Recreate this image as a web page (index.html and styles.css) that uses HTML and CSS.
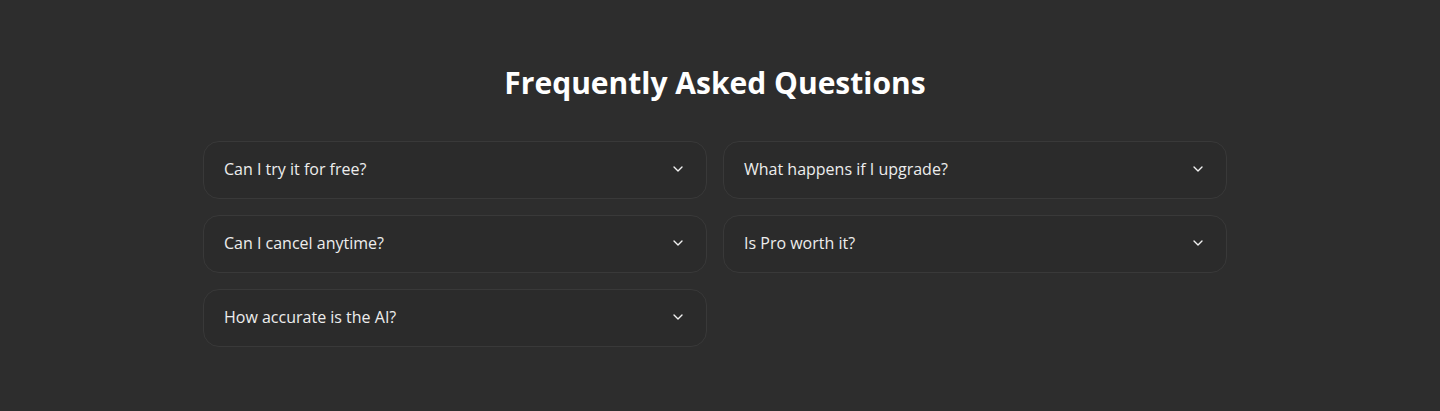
FILE: index.html
```html
<html>

<head>
    <link rel="stylesheet" href="styles.css">
</head>

<body>
    <section class="faq">
        <h2 class="faq-title">Frequently Asked Questions</h2>
        <div class="faq-grid">
            <button class="faq-item">
                <span>Can I try it for free?</span>
                <svg class="faq-icon" viewBox="0 0 24 24"><path d="m6 9 6 6 6-6"/></svg>
            </button>
            <button class="faq-item">
                <span>What happens if I upgrade?</span>
                <svg class="faq-icon" viewBox="0 0 24 24"><path d="m6 9 6 6 6-6"/></svg>
            </button>
            <button class="faq-item">
                <span>Can I cancel anytime?</span>
                <svg class="faq-icon" viewBox="0 0 24 24"><path d="m6 9 6 6 6-6"/></svg>
            </button>
            <button class="faq-item">
                <span>Is Pro worth it?</span>
                <svg class="faq-icon" viewBox="0 0 24 24"><path d="m6 9 6 6 6-6"/></svg>
            </button>
            <button class="faq-item">
                <span>How accurate is the AI?</span>
                <svg class="faq-icon" viewBox="0 0 24 24"><path d="m6 9 6 6 6-6"/></svg>
            </button>
        </div>
    </section>
</body>

</html>
```

FILE: styles.css
```css
* {
    box-sizing: border-box;
}

body {
    margin: 0;
    background: #2d2d2d;
    font-family: 'Open Sans', sans-serif;
    color: #f2f2f2;
}

.faq {
    max-width: 1034px;
    margin: 0 auto;
    padding: 64px 10px 64px 0;
}

.faq-title {
    margin: 0 0 39px;
    font-size: 30px;
    line-height: 38px;
    font-weight: 700;
    text-align: center;
    color: #fff;
}

.faq-grid {
    display: grid;
    grid-template-columns: 1fr 1fr;
    gap: 16px;
}

.faq-item {
    display: flex;
    align-items: center;
    justify-content: space-between;
    padding: 15px 20px 17px;
    background: #2b2b2b;
    border: 1px solid #393939;
    border-radius: 16px;
    font-family: inherit;
    font-size: 16px;
    line-height: 24px;
    color: #ededed;
    text-align: left;
    cursor: pointer;
}

.faq-icon {
    width: 16px;
    height: 16px;
    fill: none;
    stroke: #f2f2f2;
    stroke-width: 2;
    stroke-linecap: round;
    stroke-linejoin: round;
}
```
